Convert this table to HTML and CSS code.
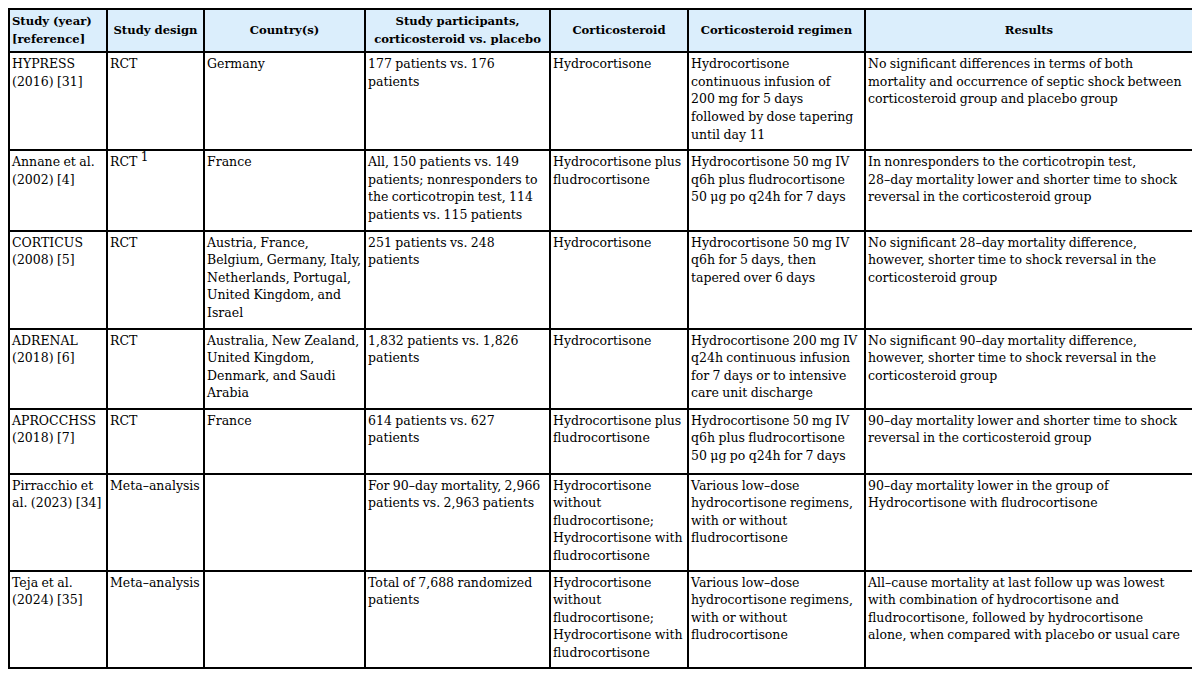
FILE: index.html
```
<!DOCTYPE html>
<html>
<head>
<meta charset="utf-8">
<link rel="stylesheet" href="styles.css">
</head>
<body>
<table class="tbl">
<colgroup>
<col class="c1"><col class="c2"><col class="c3"><col class="c4"><col class="c5"><col class="c6"><col class="c7">
</colgroup>
<thead>
<tr>
<th class="left">Study (year)<br>[reference]</th>
<th>Study design</th>
<th>Country(s)</th>
<th>Study participants,<br>corticosteroid vs. placebo</th>
<th>Corticosteroid</th>
<th>Corticosteroid regimen</th>
<th>Results</th>
</tr>
</thead>
<tbody>
<tr>
<td>HYPRESS<br>(2016) [31]</td>
<td>RCT</td>
<td>Germany</td>
<td>177 patients vs. 176<br>patients</td>
<td>Hydrocortisone</td>
<td>Hydrocortisone<br>continuous infusion of<br>200 mg for 5 days<br>followed by dose tapering<br>until day 11</td>
<td>No significant differences in terms of both<br>mortality and occurrence of septic shock between<br>corticosteroid group and placebo group</td>
</tr>
<tr>
<td>Annane et al.<br>(2002) [4]</td>
<td>RCT <sup>1</sup></td>
<td>France</td>
<td>All, 150 patients vs. 149<br>patients; nonresponders to<br>the corticotropin test, 114<br>patients vs. 115 patients</td>
<td>Hydrocortisone plus<br>fludrocortisone</td>
<td>Hydrocortisone 50 mg IV<br>q6h plus fludrocortisone<br>50 μg po q24h for 7 days</td>
<td>In nonresponders to the corticotropin test,<br>28–day mortality lower and shorter time to shock<br>reversal in the corticosteroid group</td>
</tr>
<tr>
<td>CORTICUS<br>(2008) [5]</td>
<td>RCT</td>
<td>Austria, France,<br>Belgium, Germany, Italy,<br>Netherlands, Portugal,<br>United Kingdom, and<br>Israel</td>
<td>251 patients vs. 248<br>patients</td>
<td>Hydrocortisone</td>
<td>Hydrocortisone 50 mg IV<br>q6h for 5 days, then<br>tapered over 6 days</td>
<td>No significant 28–day mortality difference,<br>however, shorter time to shock reversal in the<br>corticosteroid group</td>
</tr>
<tr>
<td>ADRENAL<br>(2018) [6]</td>
<td>RCT</td>
<td>Australia, New Zealand,<br>United Kingdom,<br>Denmark, and Saudi<br>Arabia</td>
<td>1,832 patients vs. 1,826<br>patients</td>
<td>Hydrocortisone</td>
<td>Hydrocortisone 200 mg IV<br>q24h continuous infusion<br>for 7 days or to intensive<br>care unit discharge</td>
<td>No significant 90–day mortality difference,<br>however, shorter time to shock reversal in the<br>corticosteroid group</td>
</tr>
<tr class="short">
<td>APROCCHSS<br>(2018) [7]</td>
<td>RCT</td>
<td>France</td>
<td>614 patients vs. 627<br>patients</td>
<td>Hydrocortisone plus<br>fludrocortisone</td>
<td>Hydrocortisone 50 mg IV<br>q6h plus fludrocortisone<br>50 μg po q24h for 7 days</td>
<td>90–day mortality lower and shorter time to shock<br>reversal in the corticosteroid group</td>
</tr>
<tr class="tight">
<td>Pirracchio et<br>al. (2023) [34]</td>
<td>Meta–analysis</td>
<td></td>
<td>For 90–day mortality, 2,966<br>patients vs. 2,963 patients</td>
<td>Hydrocortisone<br>without<br>fludrocortisone;<br>Hydrocortisone with<br>fludrocortisone</td>
<td>Various low–dose<br>hydrocortisone regimens,<br>with or without<br>fludrocortisone</td>
<td>90–day mortality lower in the group of<br>Hydrocortisone with fludrocortisone</td>
</tr>
<tr class="tight">
<td>Teja et al.<br>(2024) [35]</td>
<td>Meta–analysis</td>
<td></td>
<td>Total of 7,688 randomized<br>patients</td>
<td>Hydrocortisone<br>without<br>fludrocortisone;<br>Hydrocortisone with<br>fludrocortisone</td>
<td>Various low–dose<br>hydrocortisone regimens,<br>with or without<br>fludrocortisone</td>
<td>All–cause mortality at last follow up was lowest<br>with combination of hydrocortisone and<br>fludrocortisone, followed by hydrocortisone<br>alone, when compared with placebo or usual care</td>
</tr>
</tbody>
</table>
</body>
</html>
```
FILE: styles.css
```
html, body {
  background: #ffffff;
}
body {
  margin: 8px;
  font-family: "DejaVu Serif", "Liberation Serif", serif;
  font-size: 12.5px;
  color: #000;
}
.tbl {
  border-collapse: collapse;
  table-layout: fixed;
  width: 1184px;
}
.c1 { width: 98px; }
.c2 { width: 97px; }
.c3 { width: 161px; }
.c4 { width: 185px; }
.c5 { width: 138px; }
.c6 { width: 177px; }
.c7 { width: 328px; }
.tbl th, .tbl td {
  border: 2px solid #000;
  vertical-align: top;
  text-align: left;
  white-space: nowrap;
  overflow: hidden;
  line-height: 17.6px;
  padding: 2px 1px 6px 2px;
}
.tbl td {
  word-spacing: -0.6px;
}
.tbl .short td {
  padding-bottom: 8px;
}
.tbl .tight td {
  padding-bottom: 5px;
}
.tbl th {
  background: #dbeefc;
  font-weight: bold;
  font-size: 11.6px;
  text-align: center;
  vertical-align: middle;
  padding: 3px 2px 3px 2px;
}
.tbl th.left {
  text-align: left;
}
sup {
  font-size: 12px;
  line-height: 0;
  vertical-align: 5px;
}
```
